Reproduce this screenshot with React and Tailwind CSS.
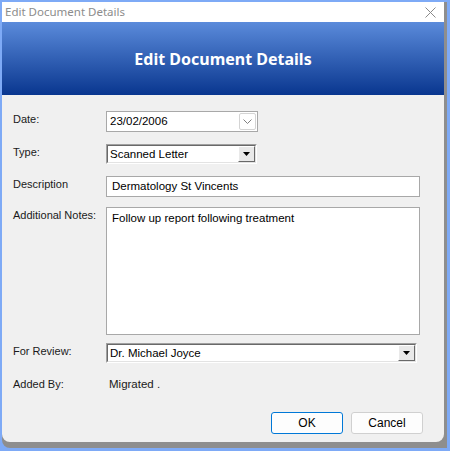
import React from 'react';

const labelFont = { fontFamily: '"Liberation Sans", Arial, sans-serif' };

const Row = ({ label, className, children }) => (
    <div className={`flex items-start ${className}`}>
        <div className="w-[93px] shrink-0 text-[11px] leading-[14px] text-[#1a1a1a] pt-[1px]">{label}</div>
        {children}
    </div>
);

const ComboArrow = () => (
    <div className="w-[17px] h-full bg-[#e9e9e9] border-t border-l border-t-white border-l-white border-r border-b border-r-[#696969] border-b-[#696969] flex items-center justify-center">
        <svg width="7" height="4" viewBox="0 0 7 4">
            <polygon points="0,0 7,0 3.5,4" fill="#000" />
        </svg>
    </div>
);

const Combo = ({ value, width }) => (
    <div className={`${width} h-[20px] border-t border-l border-t-[#a0a0a0] border-l-[#a0a0a0] border-b border-r border-b-white border-r-white`}>
        <div className="h-full border-t border-l border-t-[#696969] border-l-[#696969] border-b border-r border-b-[#e3e3e3] border-r-[#e3e3e3] bg-white flex">
            <div className="flex-1 pl-[2px] text-[11.5px] leading-[16px] text-black">{value}</div>
            <ComboArrow />
        </div>
    </div>
);

const App = () => {
    return (
        <div className="w-[450px] h-[451px] bg-[#7eaaf6] pl-[2px] pt-[2px]" style={labelFont}>
            <div className="w-[445px] h-[446px] bg-[#8e8e8e] rounded-bl-[8px]">
                <div className="w-[442px] h-[440px] bg-[#f0f0f0] rounded-b-[8px] overflow-hidden flex flex-col">
                    {/* title bar */}
                    <div className="h-[20px] bg-white flex items-center justify-between pl-[3px] pr-[8px]">
                        <span className="text-[11.5px] text-[#8c8c8c]" style={{ fontFamily: '"Noto Sans", sans-serif' }}>
                            Edit Document Details
                        </span>
                        <svg width="11" height="11" viewBox="0 0 11 11" className="mt-[1px]">
                            <path d="M0.5 0.5 L10.5 10.5 M10.5 0.5 L0.5 10.5" stroke="#8a8a8a" strokeWidth="1" />
                        </svg>
                    </div>
                    {/* header */}
                    <div className="h-[73px] bg-gradient-to-b from-[#5b8bdb] to-[#08368f] flex items-center justify-center">
                        <h1 className="text-white text-[16px] font-bold" style={{ fontFamily: '"Noto Sans", sans-serif' }}>
                            Edit Document Details
                        </h1>
                    </div>
                    {/* body */}
                    <div className="flex-1 flex flex-col pl-[11px] pt-[16px]">
                        <Row label="Date:">
                            <div className="w-[152px] h-[21px] border border-[#a8a8a8] bg-white flex items-center pr-[1px]">
                                <div className="flex-1 pl-[3px] text-[11.5px] text-black">23/02/2006</div>
                                <div className="w-[17px] h-[17px] border border-[#d4d4d4] rounded-[2px] bg-white flex items-center justify-center">
                                    <svg width="9" height="5" viewBox="0 0 9 5">
                                        <path d="M0.5 0.5 L4.5 4.5 L8.5 0.5" stroke="#808080" fill="none" strokeWidth="1" />
                                    </svg>
                                </div>
                            </div>
                        </Row>
                        <Row label="Type:" className="mt-[12px]">
                            <Combo value="Scanned Letter" width="w-[151px]" />
                        </Row>
                        <Row label="Description" className="mt-[12px]">
                            <div className="w-[314px] h-[21px] border border-[#a8a8a8] bg-white pl-[5px] text-[11.5px] leading-[19px] text-black">
                                Dermatology St Vincents
                            </div>
                        </Row>
                        <Row label="Additional Notes:" className="mt-[10px]">
                            <div className="w-[314px] h-[128px] border border-[#a8a8a8] bg-white pl-[5px] pt-[3px] text-[11.5px] leading-[14px] text-black">
                                Follow up report following treatment
                            </div>
                        </Row>
                        <Row label="For Review:" className="mt-[8px]">
                            <Combo value="Dr. Michael Joyce" width="w-[311px]" />
                        </Row>
                        <Row label="Added By:" className="mt-[13px]">
                            <div className="pl-[3px] pt-[1px] text-[11.5px] leading-[14px] text-[#1a1a1a]">Migrated .</div>
                        </Row>
                        <div className="flex justify-end gap-[8px] pr-[21px] mt-[21px]">
                            <button className="w-[72px] h-[22px] border border-[#0078d7] rounded-[3px] bg-[#fdfdfd] text-[12px] text-black">
                                OK
                            </button>
                            <button className="w-[72px] h-[22px] border border-[#d0d0d0] rounded-[3px] bg-[#fdfdfd] text-[12px] text-black">
                                Cancel
                            </button>
                        </div>
                    </div>
                </div>
            </div>
        </div>
    );
};

export default App;
